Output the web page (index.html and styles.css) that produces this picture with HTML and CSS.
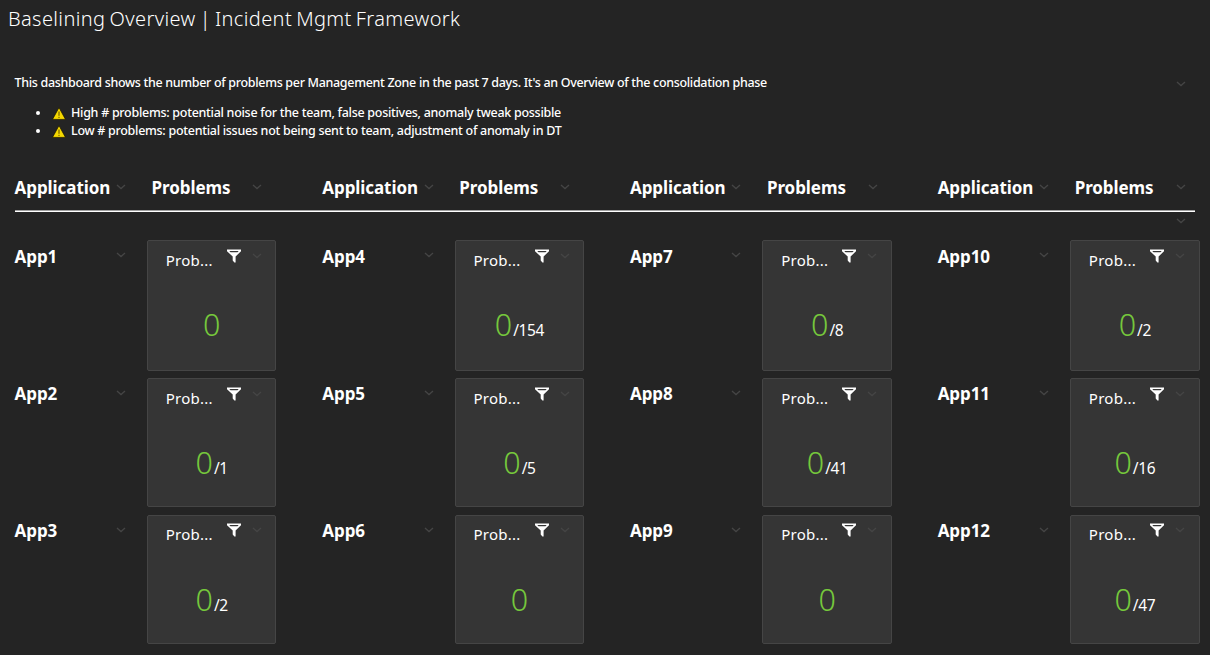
FILE: index.html
```html
<!DOCTYPE html>
<html lang="en">
<head>
<meta charset="utf-8">
<title>Baselining Overview | Incident Mgmt Framework</title>
<link rel="stylesheet" href="styles.css">
</head>
<body>
<svg class="sprite" aria-hidden="true">
  <symbol id="chevron" viewBox="0 0 10 6"><path d="M1 1l4 3.600L9 1" fill="none" stroke="currentColor" stroke-width="1.300"/></symbol>
  <symbol id="filter" viewBox="0 0 14 14"><path fill="currentColor" fill-rule="evenodd" d="M0 .5h14v1.800L8.600 7.500v6H7.400L5.700 11.500v-4L0 2.300zM2.300 2l1.200 1.200h7L11.700 2z"/></symbol>
  <symbol id="warning" viewBox="0 0 14 13"><path d="M7 .6L13.500 12.400H.5z" fill="#f5d800" stroke="#151100" stroke-width=".7"/><path d="M7 4.500v4.300M7 9.800v1.200" stroke="#5a4a00" stroke-width="1"/></symbol>
</svg>
<h1 class="title"><span>Baselining Overview | Incident Mgmt Framework</span></h1>
<section class="intro">
  <div>
    <p class="intro-text"><span>This dashboard shows the number of problems per Management Zone in the past 7 days. It's an Overview of the consolidation phase</span></p>
    <ul class="notes">
      <li><svg class="warning"><use href="#warning"/></svg><span class="note-high">High # problems: potential noise for the team, false positives, anomaly tweak possible</span></li>
      <li><svg class="warning"><use href="#warning"/></svg><span class="note-low">Low # problems: potential issues not being sent to team, adjustment of anomaly in DT</span></li>
    </ul>
  </div>
  <svg class="chevron"><use href="#chevron"/></svg>
</section>
<div class="head">
  <div class="pair"><div class="label"><span>Application</span><svg class="chevron"><use href="#chevron"/></svg></div><div class="label label-problems"><span>Problems</span><svg class="chevron"><use href="#chevron"/></svg></div></div>
  <div class="pair"><div class="label"><span>Application</span><svg class="chevron"><use href="#chevron"/></svg></div><div class="label label-problems"><span>Problems</span><svg class="chevron"><use href="#chevron"/></svg></div></div>
  <div class="pair"><div class="label"><span>Application</span><svg class="chevron"><use href="#chevron"/></svg></div><div class="label label-problems"><span>Problems</span><svg class="chevron"><use href="#chevron"/></svg></div></div>
  <div class="pair"><div class="label"><span>Application</span><svg class="chevron"><use href="#chevron"/></svg></div><div class="label label-problems"><span>Problems</span><svg class="chevron"><use href="#chevron"/></svg></div></div>
</div>
<div class="rule"><svg class="chevron"><use href="#chevron"/></svg></div>
<main class="apps">
  <div class="pair"><div class="label"><span>App1</span><svg class="chevron"><use href="#chevron"/></svg></div><article class="card"><header><span class="name">Prob...</span><svg class="filter"><use href="#filter"/></svg><svg class="chevron"><use href="#chevron"/></svg></header><p class="value"><b>0</b></p></article></div>
  <div class="pair"><div class="label"><span>App4</span><svg class="chevron"><use href="#chevron"/></svg></div><article class="card"><header><span class="name">Prob...</span><svg class="filter"><use href="#filter"/></svg><svg class="chevron"><use href="#chevron"/></svg></header><p class="value"><b>0</b><span>/154</span></p></article></div>
  <div class="pair"><div class="label"><span>App7</span><svg class="chevron"><use href="#chevron"/></svg></div><article class="card"><header><span class="name">Prob...</span><svg class="filter"><use href="#filter"/></svg><svg class="chevron"><use href="#chevron"/></svg></header><p class="value"><b>0</b><span>/8</span></p></article></div>
  <div class="pair"><div class="label"><span>App10</span><svg class="chevron"><use href="#chevron"/></svg></div><article class="card"><header><span class="name">Prob...</span><svg class="filter"><use href="#filter"/></svg><svg class="chevron"><use href="#chevron"/></svg></header><p class="value"><b>0</b><span>/2</span></p></article></div>
  <div class="pair"><div class="label"><span>App2</span><svg class="chevron"><use href="#chevron"/></svg></div><article class="card"><header><span class="name">Prob...</span><svg class="filter"><use href="#filter"/></svg><svg class="chevron"><use href="#chevron"/></svg></header><p class="value"><b>0</b><span>/1</span></p></article></div>
  <div class="pair"><div class="label"><span>App5</span><svg class="chevron"><use href="#chevron"/></svg></div><article class="card"><header><span class="name">Prob...</span><svg class="filter"><use href="#filter"/></svg><svg class="chevron"><use href="#chevron"/></svg></header><p class="value"><b>0</b><span>/5</span></p></article></div>
  <div class="pair"><div class="label"><span>App8</span><svg class="chevron"><use href="#chevron"/></svg></div><article class="card"><header><span class="name">Prob...</span><svg class="filter"><use href="#filter"/></svg><svg class="chevron"><use href="#chevron"/></svg></header><p class="value"><b>0</b><span>/41</span></p></article></div>
  <div class="pair"><div class="label"><span>App11</span><svg class="chevron"><use href="#chevron"/></svg></div><article class="card"><header><span class="name">Prob...</span><svg class="filter"><use href="#filter"/></svg><svg class="chevron"><use href="#chevron"/></svg></header><p class="value"><b>0</b><span>/16</span></p></article></div>
  <div class="pair"><div class="label"><span>App3</span><svg class="chevron"><use href="#chevron"/></svg></div><article class="card"><header><span class="name">Prob...</span><svg class="filter"><use href="#filter"/></svg><svg class="chevron"><use href="#chevron"/></svg></header><p class="value"><b>0</b><span>/2</span></p></article></div>
  <div class="pair"><div class="label"><span>App6</span><svg class="chevron"><use href="#chevron"/></svg></div><article class="card"><header><span class="name">Prob...</span><svg class="filter"><use href="#filter"/></svg><svg class="chevron"><use href="#chevron"/></svg></header><p class="value"><b>0</b></p></article></div>
  <div class="pair"><div class="label"><span>App9</span><svg class="chevron"><use href="#chevron"/></svg></div><article class="card"><header><span class="name">Prob...</span><svg class="filter"><use href="#filter"/></svg><svg class="chevron"><use href="#chevron"/></svg></header><p class="value"><b>0</b></p></article></div>
  <div class="pair"><div class="label"><span>App12</span><svg class="chevron"><use href="#chevron"/></svg></div><article class="card"><header><span class="name">Prob...</span><svg class="filter"><use href="#filter"/></svg><svg class="chevron"><use href="#chevron"/></svg></header><p class="value"><b>0</b><span>/47</span></p></article></div>
</main>
</body>
</html>
```
FILE: styles.css
```css
* { box-sizing: border-box; margin: 0; padding: 0; }
body { width: 1210px; height: 655px; overflow: hidden; background: #242424; color: #fff; font-family: "Noto Sans", "Open Sans", sans-serif; }
.sprite { display: none; }
.title { height: 66px; padding: 5px 0 0 8px; font-size: 20px; line-height: 28px; font-weight: 300; letter-spacing: 0.38px; word-spacing: -1.5px; white-space: nowrap; }
.intro { display: flex; justify-content: space-between; height: 109px; padding: 8px 24px 0 14.500px; font-size: 12.500px; font-weight: 500; line-height: 18px; letter-spacing: -0.32px; white-space: nowrap; }
.intro .chevron { margin-top: 7px; }
.notes { list-style: none; padding-top: 12px; letter-spacing: -0.285px; }
.notes li { display: flex; align-items: center; height: 18px; padding-left: 21.500px; }
.notes li::before { content: ""; width: 4px; height: 4px; margin-right: 12px; border-radius: 50%; background: #fff; }
.warning { width: 14px; height: 13px; margin: 0 5px 0 0; }
.chevron { display: block; flex: none; width: 10px; height: 6px; color: #454545; }
.head, .apps { display: grid; grid-template-columns: repeat(4, 307.7px); padding-left: 14px; width: 1260px; }
.head { height: 35px; }
.pair { display: grid; grid-template-columns: 133px 129.450px; }
.label { display: flex; align-items: flex-start; justify-content: space-between; padding-left: 0.6px; padding-right: 21px; height: 28px; font-size: 17px; font-weight: 700; line-height: 24px; letter-spacing: -0.08px; }
.head .label { padding-top: 1px; }
.label .chevron { margin-top: 8px; }
.head .label-problems { padding-left: 4.600px; padding-right: 14px; }
.rule { display: flex; justify-content: flex-end; height: 30px; margin: 0 15px; padding: 7px 9px 0 0; border-top: 1px solid #a0a0a0; box-shadow: inset 0 1px #fff; }
.apps { grid-template-rows: 131px 130px 129px; row-gap: 7px; }
.apps .label { padding-top: 5px; }
.apps .label .chevron { margin-top: 7px; }
.apps .pair:nth-child(n+5) .label { padding-top: 4px; }
.apps .pair:nth-child(n+5) .label .chevron { margin-top: 8px; }
.card { border: 1px solid #454545; border-radius: 2px; background: #353535; }
.pair:nth-child(n+5) .card { height: 129px; }
.card header { display: flex; align-items: flex-start; height: 65px; padding: 8px 0 0 17.800px; font-size: 15px; line-height: 22px; letter-spacing: 0.25px; }
.pair:nth-child(n+9) .card header { padding-top: 7px; }
.name { width: 61.200px; }
.filter { width: 14px; height: 14px; }
.card .chevron { margin: 4px 0 0 11px; }
.value { display: flex; align-items: baseline; justify-content: center; height: 36px; line-height: 36px; font-size: 15.500px; letter-spacing: -0.4px; }
.value b { font-size: 30.500px; font-weight: 350; letter-spacing: 0; color: #76c83c; }
.value span { padding-left: 1px; }
```
